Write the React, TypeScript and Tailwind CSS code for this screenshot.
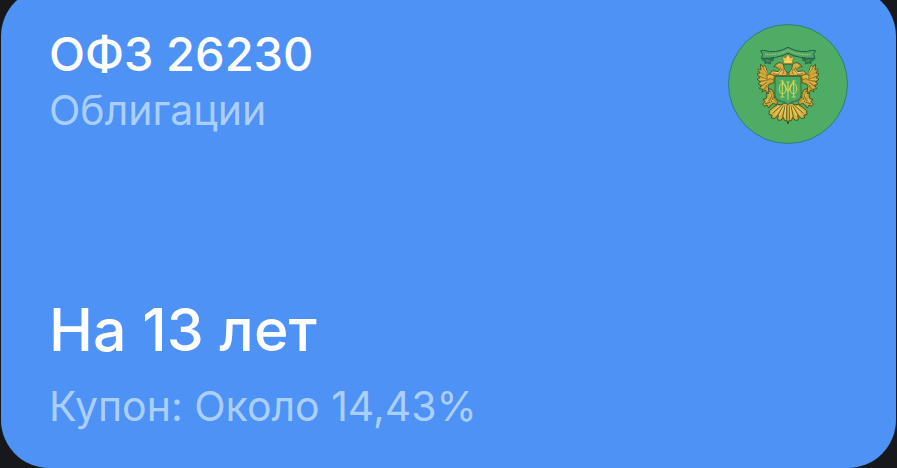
import React from 'react';

// Left half of the coat of arms, mirrored for the right side
const EmblemHalf: React.FC = () => (
  <g strokeLinejoin="round" strokeLinecap="round">
    {/* ribbon curl and side head */}
    <path d="M134 131l18 4 16-4-3 9-8 1 1 9-9-3-8 2-1-8-7-3z" fill="#2f7d50" stroke="#1d5e45" strokeWidth="2" />
    <path d="M146 139l8 3" stroke="#78a84e" strokeWidth="2" />
    {/* wing */}
    <path
      d="M128 152L136 158L140 154L145 164L148 182L168 186L168 206L154 210L150 218L154 232L146 236L142 228L132 234L134 225L124 224L130 214L120 210L127 204L117 195L126 192L117 179L125 178L119 165L128 167Z"
      fill="#cfa336"
      stroke="#3f4a20"
      strokeWidth="2.5"
    />
    <path d="M134 160l13 22M124 171l21 15M123 185l21 9M125 202l19-2M130 217l15-11M138 227l9-14" stroke="#5c4b1b" strokeWidth="2" fill="none" />
    <path d="M131 159l14 22M122 167l20 17M122 181l20 10M123 195l19 2M126 209l17-6M132 223l14-14M140 158l8 22" stroke="#efcd5c" strokeWidth="2" fill="none" />
    <path d="M148 184q12-9 22 2l-4 11q-9-8-18 1z" fill="#e4b43c" stroke="#715718" strokeWidth="2" />
    {/* neck and head */}
    <path
      d="M168 157l8-9 13-2 9 7 2 11 7 7v14h-40l-12-6 8-9 17 3 5-7-5-5z"
      fill="#d9b047"
      stroke="#4d491d"
      strokeWidth="2.5"
    />
    <path d="M170 155l8-4 9 2M187 160l4 9-7 8M194 164l4 9-4 7M166 179l17 3" stroke="#785b18" strokeWidth="2" fill="none" />
    <path d="M181 152h5M190 173l-5 7M172 175l8 1" stroke="#fff0a0" strokeWidth="2" />
    {/* leg and claw */}
    <path
      d="M153 224L162 227L167 237L170 252L179 262L176 272L166 268L158 273L152 282L147 273L139 277L134 270L141 263L135 256L144 254L147 246L145 238L153 238Z"
      fill="#cba63a"
      stroke="#394b20"
      strokeWidth="2.5"
    />
    <path d="M156 232l5 17-8 11M166 249l-5 14M142 269l14-4M166 257l6 6" stroke="#534d1f" strokeWidth="2" fill="none" />
    <path d="M155 235l3 12M149 256l-4 8M162 258l7 4" stroke="#f0cb52" strokeWidth="3" fill="none" />
    {/* tail feathers */}
    <path
      d="M210 266L200 268L190 272L178 272L167 279L154 290L153 302L162 303L160 312L170 313L177 307L181 319L190 318L195 310L201 321L206 319L210 328Z"
      fill="#d2b03f"
      stroke="#39471e"
      strokeWidth="2.5"
    />
    <path d="M206 276v40M201 276l-7 34M195 277l-17 28M190 275l-26 22M182 304l-3 7" stroke="#5c551d" strokeWidth="2.5" fill="none" />
    <path d="M210 274v44M203 278l-3 31M197 279l-12 25M190 278l-17 23M182 277l-19 17" stroke="#f4dc70" strokeWidth="2.5" fill="none" />
  </g>
);

const Emblem: React.FC = () => (
  <svg className="size-30 shrink-0" viewBox="30 30 360 360" fill="none" role="img" aria-label="Эмблема">
    <circle cx="210" cy="210" r="178.5" fill="#4fac64" stroke="#2f7d83" strokeWidth="3" />
    <EmblemHalf />
    <g transform="translate(420 0) scale(-1 1)">
      <EmblemHalf />
    </g>
    {/* small shield between the heads */}
    <path d="M197 153q13-5 26 0 1 15-13 23-14-8-13-23z" fill="#46a45e" stroke="#355622" strokeWidth="2" />
    {/* crown */}
    <path d="M193 126l9 6 8-13 8 13 9-6-4 23h-26z" fill="#efc248" stroke="#73611f" strokeWidth="2" strokeLinejoin="round" />
    <path d="M200 143h20M210 128v12" stroke="#fff092" strokeWidth="2" />
    {/* ribbon */}
    <path
      d="M128 110l9-1q36 11 73-9 37 20 73 9l10 1-6 10 4 13q-47 2-81-15-34 17-80 15l4-12z"
      fill="#4fa461"
      stroke="#1c624a"
      strokeWidth="3"
      strokeLinejoin="round"
    />
    <path d="M141 121q38 4 69-12 31 16 69 12" stroke="#a2c67c" strokeWidth="4" strokeDasharray="3 2" />
    {/* shield with the monogram */}
    <path d="M171 187h78v57q-2 15-20 18-12 1-19 10-7-9-19-10-18-3-20-18z" fill="#4aaa62" stroke="#4c6325" strokeWidth="3" strokeLinejoin="round" />
    <path d="M174 251q3 10 18 13 12 1 18 9 6-8 18-9 15-3 18-13" stroke="#2b7b78" strokeWidth="2" />
    <g stroke="#d0cf55" strokeWidth="3.5">
      <path d="M193 200v49M227 200v49M210 203v54M193 201l17 32 17-32" />
      <ellipse cx="194" cy="224" rx="10" ry="15" />
      <ellipse cx="226" cy="224" rx="10" ry="15" />
      <path d="M187 201h10M223 201h10M187 249h12M221 249h12M205 204h10" strokeWidth="3" />
    </g>
  </svg>
);

const App: React.FC = () => {
  return (
    <main className="min-h-screen bg-[#17181c] px-px overflow-hidden flex flex-col font-['Inter','Noto_Sans',sans-serif]">
      <article className="-mt-3 flex-1 flex flex-col justify-between gap-12 rounded-[48px] bg-[#4e92f6] px-12 pt-9 pb-9">
        <header className="flex items-start justify-between gap-6">
          <div>
            <h1 className="text-[47px] leading-[60px] font-medium text-white">ОФЗ 26230</h1>
            <p className="text-[41px] leading-[52px] text-[#abcffc]">Облигации</p>
          </div>
          <Emblem />
        </header>
        <div className="flex flex-col gap-3.5">
          <p className="text-[59px] leading-[72px] font-medium text-white">На 13 лет</p>
          <p className="text-[41px] leading-[52px] text-[#abcffc]">Купон: Около 14,43%</p>
        </div>
      </article>
    </main>
  );
};

export default App;
